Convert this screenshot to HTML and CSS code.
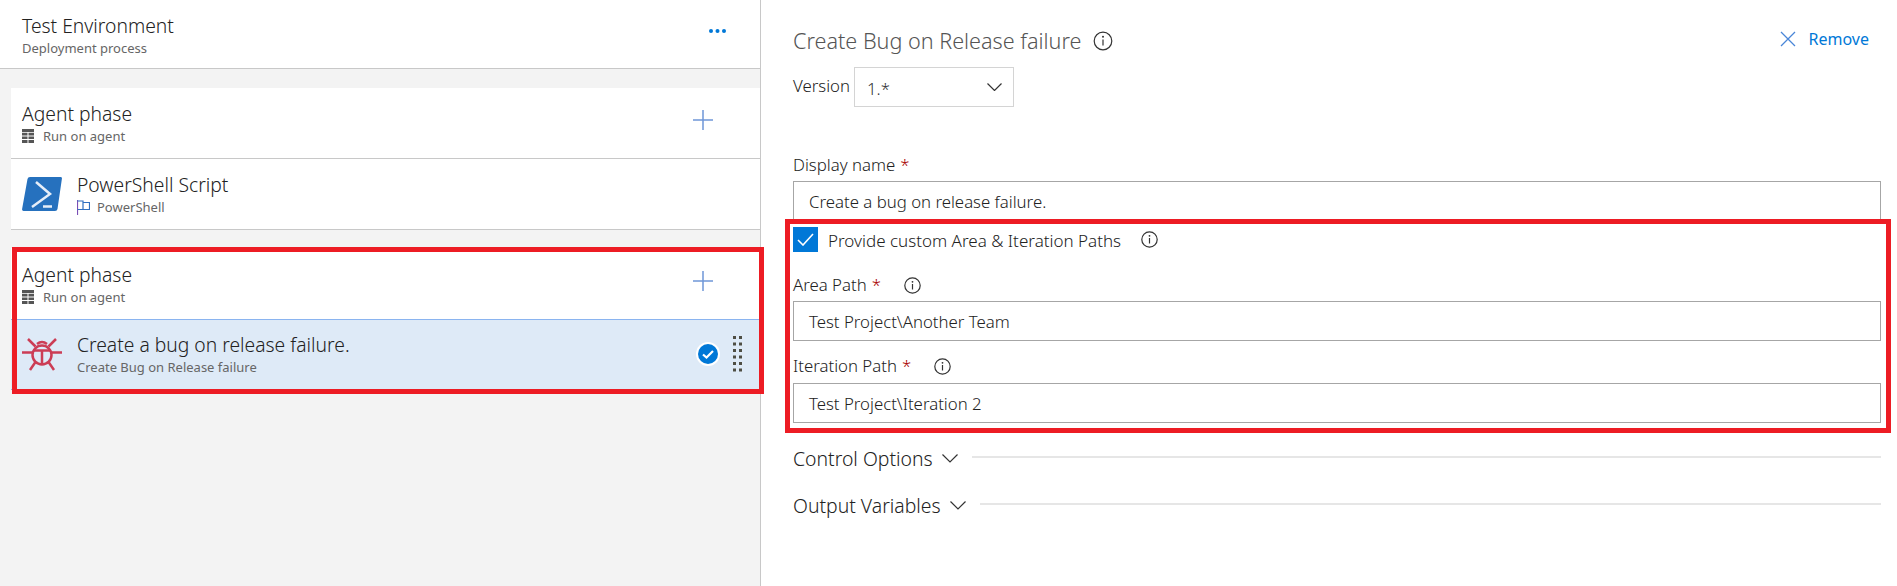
FILE: index.html
```html
<!DOCTYPE html>
<html lang="en">
<head>
<meta charset="utf-8">
<title>Create Bug on Release failure</title>
<link rel="stylesheet" href="styles.css">
</head>
<body>
<div class="page">
  <aside class="left">
    <header class="env">
      <div class="env-text">
        <div class="t-env">Test Environment</div>
        <div class="sub">Deployment process</div>
      </div>
      <svg class="more" width="17" height="4" viewBox="0 0 17 4"><circle cx="2" cy="2" r="2"/><circle cx="8.500" cy="2" r="2"/><circle cx="15" cy="2" r="2"/></svg>
    </header>
    <div class="cards">
      <section class="card">
        <div class="row phase">
          <div class="grow">
            <div class="t-main">Agent phase</div>
            <div class="sub sub-icon">
              <svg class="ic-server" width="12" height="14" viewBox="0 0 12 14"><path d="M0 0h12v3H0zM0 3.800h5.500v2.700H0zM6.500 3.800H12v2.700H6.500zM0 7.400h5.500v2.700H0zM6.500 7.400H12v2.700H6.500zM0 11h5.500v3H0zM6.500 11H12v3H6.500z"/></svg>
              <span>Run on agent</span>
            </div>
          </div>
          <svg class="plus" width="20" height="20" viewBox="0 0 20 20"><path d="M0 10h20M10 0v20"/></svg>
        </div>
        <div class="row task">
          <svg class="task-icon" width="40" height="34" viewBox="0 0 40 34"><path class="ps-bg" d="M8 0h30.500q1.800 0 1.400 1.800L35.500 32q-.3 2-2.500 2H1.500Q-.2 34 .1 32L5.500 2Q5.900 0 8 0z"/><path class="ps-fg" d="M14 5l14 12-18 13M21 29.500h9"/></svg>
          <div class="grow">
            <div class="t-main">PowerShell Script</div>
            <div class="sub sub-icon sub-flag">
              <svg width="13" height="15" viewBox="0 0 13 15"><path class="flag-pole" d="M.5 0v15"/><path class="flag-top" d="M.5 1h5.500v1.500h6.500v7H6v-7M.5 9.500H6"/></svg>
              <span>PowerShell</span>
            </div>
          </div>
        </div>
      </section>
      <section class="card card-b">
        <div class="row phase">
          <div class="grow">
            <div class="t-main">Agent phase</div>
            <div class="sub sub-icon">
              <svg class="ic-server" width="12" height="14" viewBox="0 0 12 14"><path d="M0 0h12v3H0zM0 3.800h5.500v2.700H0zM6.500 3.800H12v2.700H6.500zM0 7.400h5.500v2.700H0zM6.500 7.400H12v2.700H6.500zM0 11h5.500v3H0zM6.500 11H12v3H6.500z"/></svg>
              <span>Run on agent</span>
            </div>
          </div>
          <svg class="plus" width="20" height="20" viewBox="0 0 20 20"><path d="M0 10h20M10 0v20"/></svg>
        </div>
        <div class="row task selected">
          <svg class="task-icon bug" width="40" height="33" viewBox="0 0 40 33"><path d="M6 1l7.500 7.500M34 1l-7.500 7.500M0 14.500h10.500M29.500 14.500H40M13.500 24L8 32M26.500 24L32 32M15 6q5-4 10 0"/><circle cx="20" cy="17" r="9.500"/><path d="M11 12.500h18M20 12.500V26"/></svg>
          <div class="grow">
            <div class="t-main">Create a bug on release failure.</div>
            <div class="sub">Create Bug on Release failure</div>
          </div>
          <svg class="check" width="24" height="24" viewBox="0 0 24 24"><circle class="check-ring" cx="12" cy="12" r="12"/><circle class="check-disc" cx="12" cy="12" r="10"/><path class="check-mark" d="M7 12.500l3.500 3L17 9"/></svg>
          <svg class="grip" width="9" height="36" viewBox="0 0 9 36"><path d="M0 0h3v3H0zM6 0h3v3H6zM0 6.500h3v3H0zM6 6.500h3v3H6zM0 13h3v3H0zM6 13h3v3H6zM0 19.500h3v3H0zM6 19.500h3v3H6zM0 26h3v3H0zM6 26h3v3H6zM0 32.500h3v3H0zM6 32.500h3v3H6z"/></svg>
        </div>
      </section>
    </div>
  </aside>

  <main class="right">
    <div class="title-row">
      <h1 class="title">Create Bug on Release failure</h1>
      <svg class="info info-lg" width="20" height="20" viewBox="0 0 20 20"><circle cx="10" cy="10" r="8.800"/><path d="M10 8.500v6"/><circle class="dot" cx="10" cy="5.800" r="1"/></svg>
      <div class="remove">
        <svg width="16" height="16" viewBox="0 0 16 16"><path d="M1 1l14 14M15 1L1 15"/></svg>
        <span>Remove</span>
      </div>
    </div>
    <div class="version-row">
      <span class="label">Version</span>
      <div class="select">
        <span>1.*</span>
        <svg class="chev" width="15" height="8" viewBox="0 0 15 8"><path d="M.5.500l7 7 7-7"/></svg>
      </div>
    </div>
    <label class="label field-label l-display">Display name <span class="req">*</span></label>
    <div class="input i-display">Create a bug on release failure.</div>
    <div class="check-row">
      <span class="box"><svg width="17" height="13" viewBox="0 0 17 13"><path d="M1 7l5 5L16 1"/></svg></span>
      <span class="check-label">Provide custom Area &amp; Iteration Paths</span>
      <svg class="info" width="17" height="17" viewBox="0 0 17 17"><circle cx="8.500" cy="8.500" r="7.700"/><path d="M8.500 7v5.500"/><circle class="dot" cx="8.500" cy="4.800" r=".9"/></svg>
    </div>
    <label class="label field-label l-area">Area Path <span class="req">*</span>
      <svg class="info" width="17" height="17" viewBox="0 0 17 17"><circle cx="8.500" cy="8.500" r="7.700"/><path d="M8.500 7v5.500"/><circle class="dot" cx="8.500" cy="4.800" r=".9"/></svg>
    </label>
    <div class="input i-area">Test Project\Another Team</div>
    <label class="label field-label l-iter">Iteration Path <span class="req">*</span>
      <svg class="info" width="17" height="17" viewBox="0 0 17 17"><circle cx="8.500" cy="8.500" r="7.700"/><path d="M8.500 7v5.500"/><circle class="dot" cx="8.500" cy="4.800" r=".9"/></svg>
    </label>
    <div class="input i-iter">Test Project\Iteration 2</div>
    <div class="section s-control">
      <span class="section-name">Control Options</span>
      <svg class="chev" width="16" height="9" viewBox="0 0 16 9"><path d="M.5.500L8 8 15.500.500"/></svg>
      <span class="rule"></span>
    </div>
    <div class="section s-output">
      <span class="section-name">Output Variables</span>
      <svg class="chev" width="16" height="9" viewBox="0 0 16 9"><path d="M.5.500L8 8 15.500.500"/></svg>
      <span class="rule"></span>
    </div>
  </main>

  <div class="callout callout-left"></div>
  <div class="callout callout-right"></div>
</div>
</body>
</html>
```
FILE: styles.css
```css
* { box-sizing: border-box; }
html, body { margin: 0; padding: 0; background: #fff; }
body { font-family: "Noto Sans", "Open Sans", sans-serif; color: #333; }
.page { position: relative; display: flex; width: 1897px; height: 586px; overflow: hidden; }

.left { width: 761px; flex: none; background: #f3f3f3; border-right: 1px solid #c8c8c8; }
.env { height: 69px; background: #fff; border-bottom: 1px solid #c8c8c8; display: flex; align-items: center; padding: 0 34px 0 22px; justify-content: space-between; }
.env-text { margin-top: 3px; }
.more { fill: #0078d7; margin-top: -6px; }
.t-env, .t-main { font-size: 19.300px; font-weight: 300; line-height: 24px; color: #222; }
.sub { font-size: 13px; line-height: 20px; color: #666; }
.cards { padding: 19px 0 0 11px; }
.card { background: #fff; }
.card-b { margin-top: 18px; }
.row { height: 71px; display: flex; align-items: center; border-bottom: 1px solid #c8c8c8; padding-left: 11px; }
.grow { flex: 1; min-width: 0; margin-top: 2px; }
.selected .grow { margin-top: 0; }
.phase { padding-right: 47px; }
.phase .plus { margin-top: -6px; }
.sub-icon { display: flex; align-items: center; gap: 9px; }
.ic-server { fill: #555; flex: none; }
.plus { fill: none; stroke: #6f97d8; stroke-width: 1.500; }
.task-icon { flex: none; margin-right: 15px; }
.ps-bg { fill: #2671be; }
.ps-fg { fill: none; stroke: #e6eef8; stroke-width: 2.500; }
.sub-flag { gap: 7px; }
.flag-pole { fill: none; stroke: #7a4fb5; stroke-width: 1.200; }
.flag-top { fill: none; stroke: #2f6fc0; stroke-width: 1.200; }
.selected { background: #deeaf7; border-top: 1px solid #8ab4f0; border-bottom: 1px solid #8ab4f0; height: 71px; }
.card-b .phase { border-bottom: 0; }
.bug { fill: none; stroke: #cc3d55; stroke-width: 2.500; }
.check { flex: none; margin-right: 13px; margin-top: -2px; }
.check-ring { fill: #fff; }
.check-disc { fill: #0078d7; }
.check-mark { fill: none; stroke: #fff; stroke-width: 2.200; }
.grip { flex: none; fill: #4e4e44; margin-right: 18px; margin-top: -1px; }

.right { flex: 1; min-width: 0; padding: 26px 16px 0 32px; }
.title-row { height: 30px; display: flex; align-items: center; }
.title { margin: 0; font-size: 21.600px; font-weight: 300; line-height: 30px; color: #555; }
.info { fill: none; stroke: #333; stroke-width: 1.200; flex: none; }
.info .dot { fill: #333; stroke: none; }
.info-lg { margin-left: 12px; }
.remove { margin-left: auto; display: flex; align-items: center; gap: 13px; color: #0078d7; font-size: 16px; margin-right: 12px; margin-top: -4px; }
.remove svg { fill: none; stroke: #4a86d8; stroke-width: 1.300; }
.version-row { margin-top: 11px; height: 40px; display: flex; align-items: center; }
.label { font-size: 16.800px; font-weight: 300; line-height: 24px; color: #222; }
.version-row .label { margin-top: -2px; }
.select { margin-left: 4px; width: 160px; height: 40px; border: 1px solid #d4d4d4; display: flex; align-items: center; justify-content: space-between; padding: 0 11px 0 12px; font-size: 16.800px; font-weight: 300; }
.select span { margin-top: 2px; }
.chev { fill: none; stroke: #333; stroke-width: 1.200; flex: none; }
.field-label { display: flex; align-items: center; height: 24px; gap: 5px; }
.field-label .info { margin-left: 18px; }
.req { color: #a80000; }
.l-display { margin-top: 46px; }
.input { height: 40px; border: 1px solid #a6a6a6; padding: 0 15px; font-size: 16.800px; font-weight: 300; line-height: 39px; color: #222; }
.i-display, .i-area { margin-top: 4px; }
.i-iter { margin-top: 5px; }
.check-row { margin-top: 6px; height: 25px; display: flex; align-items: center; }
.box { width: 25px; height: 25px; background: #0078d7; display: flex; align-items: center; justify-content: center; }
.box svg { fill: none; stroke: #fff; stroke-width: 1.600; }
.check-label { margin-left: 10px; font-size: 17px; font-weight: 300; color: #222; margin-top: 1px; }
.check-row .info { margin-left: 20px; }
.l-area { margin-top: 21px; }
.l-iter { margin-top: 13px; }
.section { display: flex; align-items: center; height: 24px; }
.section-name { font-size: 19.400px; font-weight: 300; color: #222; }
.section .chev { margin-left: 9px; }
.rule { flex: 1; height: 2px; background: #e6e6e6; margin-left: 14px; margin-top: -2px; }
.s-control { margin-top: 23px; }
.s-output { margin-top: 23px; }

.callout { position: absolute; border: 5px solid #ed1c24; pointer-events: none; }
.callout-left { left: 12px; top: 247px; width: 752px; height: 147px; }
.callout-right { left: 785px; top: 219px; width: 1106px; height: 214px; }
```
